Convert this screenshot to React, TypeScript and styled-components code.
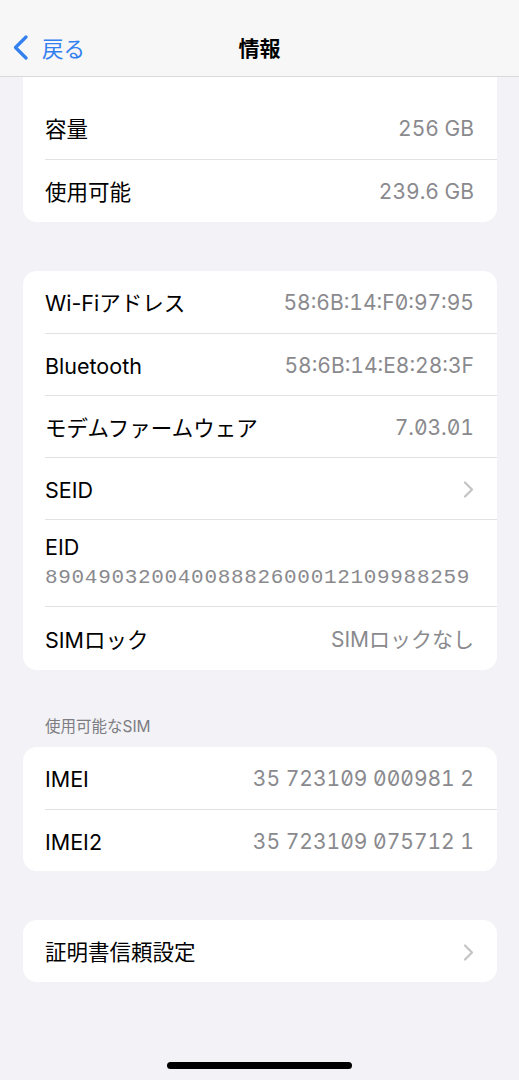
import React from 'react'
import styled, { createGlobalStyle } from 'styled-components'

const GlobalStyle = createGlobalStyle`
  html, body {
    margin: 0;
    padding: 0;
    background: #f2f2f7;
  }
  body {
    font-family: Inter, "Noto Sans CJK JP", sans-serif;
    -webkit-font-smoothing: antialiased;
  }
`

const Screen = styled.div`
  width: 519px;
  height: 1080px;
  display: flex;
  flex-direction: column;
  background: #f2f2f7;
  overflow: hidden;
`

const NavBar = styled.header`
  box-sizing: border-box;
  height: 77px;
  padding-top: 25px;
  background: #f7f7f7;
  border-bottom: 1px solid #d9d9dc;
  display: grid;
  grid-template-columns: 1fr auto 1fr;
  align-items: start;
`

const NavRow = styled.div`
  height: 44px;
  display: flex;
  align-items: center;
`

const BackButton = styled(NavRow)`
  padding-left: 12px;
  gap: 13px;
  color: #3480f0;
  font-size: 21.5px;
`

const Title = styled(NavRow)`
  font-size: 21px;
  font-weight: 700;
  color: #000;
`

const Content = styled.main`
  padding: 0 22px 0 23px;
  display: flex;
  flex-direction: column;
`

const Card = styled.section<{ $flatTop?: boolean; $gap?: number }>`
  background: #fff;
  border-radius: ${p => (p.$flatTop ? '0 0 14px 14px' : '14px')};
  margin-top: ${p => p.$gap ?? 0}px;
  overflow: hidden;
`

const CardLead = styled.div`
  height: 20px;
`

const Row = styled.div<{ $h?: number }>`
  box-sizing: border-box;
  margin-left: 22px;
  padding-right: 23px;
  padding-top: 2px;
  height: ${p => p.$h ?? 62}px;
  display: flex;
  align-items: center;
  justify-content: space-between;
  border-top: 1px solid #e2e2e5;

  ${CardLead} + &,
  &:first-child {
    border-top: none;
  }
`

const StackRow = styled(Row)`
  flex-direction: column;
  align-items: flex-start;
  justify-content: flex-start;
  padding-top: 14px;
  gap: 5px;
`

const Label = styled.span`
  font-size: 21.5px;
  line-height: 26px;
  color: #000;
`

const Value = styled.span`
  font-size: 21px;
  line-height: 26px;
  color: #8a8a8e;
  font-feature-settings: 'tnum', 'zero';
`

const MonoValue = styled.span`
  font-family: "Liberation Mono", "DejaVu Sans Mono", monospace;
  font-size: 21px;
  line-height: 26px;
  letter-spacing: 0.68px;
  color: #8a8a8e;
`

const SectionHeader = styled.h3`
  margin: 47px 0 10px 22px;
  font-size: 15.5px;
  line-height: 20px;
  font-weight: 400;
  color: #7d7d82;
`

const HomeIndicator = styled.div`
  margin: auto auto 11px;
  width: 185px;
  height: 7px;
  border-radius: 4px;
  background: #000;
`

const Chevron = () => (
  <svg width="11" height="17" viewBox="0 0 11 17" fill="none">
    <path d="M2 1.5L9 8.5L2 15.5" stroke="#c4c4c7" strokeWidth="2.2" strokeLinecap="round" strokeLinejoin="round" />
  </svg>
)

const BackChevron = () => (
  <svg width="17" height="25" viewBox="0 0 17 25" fill="none">
    <path d="M14 2L3.5 12.5L14 23" stroke="#3480f0" strokeWidth="3.2" strokeLinecap="round" strokeLinejoin="round" />
  </svg>
)

const network: [string, string][] = [
  ['Wi-Fiアドレス', '58:6B:14:F0:97:95'],
  ['Bluetooth', '58:6B:14:E8:28:3F'],
  ['モデムファームウェア', '7.03.01'],
]

export default function App() {
  return (
    <Screen>
      <GlobalStyle />
      <NavBar>
        <BackButton>
          <BackChevron />
          <span>戻る</span>
        </BackButton>
        <Title>情報</Title>
        <div />
      </NavBar>

      <Content>
        <Card $flatTop>
          <CardLead />
          <Row>
            <Label>容量</Label>
            <Value>256 GB</Value>
          </Row>
          <Row $h={63}>
            <Label>使用可能</Label>
            <Value>239.6 GB</Value>
          </Row>
        </Card>

        <Card $gap={49}>
          {network.map(([label, value]) => (
            <Row key={label}>
              <Label>{label}</Label>
              <Value>{value}</Value>
            </Row>
          ))}
          <Row>
            <Label>SEID</Label>
            <Chevron />
          </Row>
          <StackRow $h={87}>
            <Label>EID</Label>
            <MonoValue>89049032004008882600012109988259</MonoValue>
          </StackRow>
          <Row $h={64}>
            <Label>SIMロック</Label>
            <Value>SIMロックなし</Value>
          </Row>
        </Card>

        <SectionHeader>使用可能なSIM</SectionHeader>
        <Card>
          <Row>
            <Label>IMEI</Label>
            <Value>35 723109 000981 2</Value>
          </Row>
          <Row>
            <Label>IMEI2</Label>
            <Value>35 723109 075712 1</Value>
          </Row>
        </Card>

        <Card $gap={49}>
          <Row>
            <Label>証明書信頼設定</Label>
            <Chevron />
          </Row>
        </Card>
      </Content>

      <HomeIndicator />
    </Screen>
  )
}
